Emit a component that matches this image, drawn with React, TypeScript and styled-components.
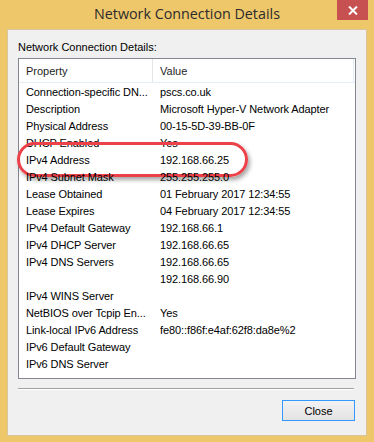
import React from "react";
import styled, { createGlobalStyle } from "styled-components";

const Global = createGlobalStyle`
  html, body { margin: 0; padding: 0; background: #efc76b; }
  body { font-family: "Liberation Sans", Arial, sans-serif; }
`;

const Window = styled.div`
  width: 374px;
  height: 442px;
  background: #efc76b;
  display: flex;
  flex-direction: column;
  box-sizing: border-box;
`;

const TitleBar = styled.div`
  height: 29px;
  display: grid;
  grid-template-columns: 1fr auto 1fr;
  align-items: start;
`;

const Title = styled.div`
  grid-column: 2;
  font-family: "Open Sans", "Noto Sans", sans-serif;
  font-size: 14.3px;
  color: #2b2b2b;
  line-height: 20px;
  padding-top: 4px;
`;

const CloseX = styled.div`
  grid-column: 3;
  justify-self: end;
  margin-right: 6px;
  width: 31px;
  height: 20px;
  background: #c75050;
  display: flex;
  align-items: center;
  justify-content: center;
`;

const Client = styled.div`
  flex: 1;
  margin: 0 7px 6px 7px;
  background: #f0f0f0;
  border: 1px solid #d8c59a;
  box-sizing: border-box;
  padding: 10px 10px 0 10px;
  display: flex;
  flex-direction: column;
  font-size: 11px;
  color: #000;
`;

const Caption = styled.div`
  line-height: 14px;
  height: 18px;
`;

const ListBox = styled.div`
  width: 338px;
  height: 321px;
  box-sizing: border-box;
  border: 1px solid #828790;
  background: #fff;
  display: flex;
  flex-direction: column;
`;

const Header = styled.div`
  display: grid;
  grid-template-columns: 134px 201px;
  height: 24px;
  box-sizing: border-box;
  border-bottom: 1px solid #e5edf6;
`;

const HeaderCell = styled.div<{ $last?: boolean }>`
  padding-left: 7px;
  display: flex;
  align-items: center;
  border-right: 1px solid ${(p) => (p.$last ? "#e5edf6" : "#e5e5e5")};
  box-sizing: border-box;
  color: #1e1e1e;
`;

const Row = styled.div`
  position: relative;
  display: grid;
  grid-template-columns: 134px 1fr;
  height: 17px;
  align-items: center;
`;

const Cell = styled.div`
  padding-left: 7px;
  white-space: nowrap;
  overflow: hidden;
  letter-spacing: -0.1px;
`;

const Highlight = styled.div`
  position: absolute;
  left: -2px;
  top: -9px;
  width: 231px;
  height: 35px;
  box-sizing: border-box;
  border: 3px solid #ec4148;
  border-radius: 18px;
  box-shadow: 2px 3px 4px rgba(0, 0, 0, 0.35);
  pointer-events: none;
`;

const Separator = styled.div`
  margin-top: 9px;
  width: 336px;
  height: 1px;
  background: #a0a0a0;
  border-bottom: 1px solid #fff;
`;

const Footer = styled.div`
  display: flex;
  justify-content: flex-end;
  padding-right: 1px;
  margin-top: 10px;
`;

const Button = styled.button`
  width: 73px;
  height: 21px;
  border: 1px solid #3399ff;
  background: linear-gradient(#f2f2f2, #e3e3e3);
  font-family: "Liberation Sans", Arial, sans-serif;
  font-size: 11px;
  color: #000;
  padding: 0;
`;

const rows: [string, string][] = [
  ["Connection-specific DN...", "pscs.co.uk"],
  ["Description", "Microsoft Hyper-V Network Adapter"],
  ["Physical Address", "00-15-5D-39-BB-0F"],
  ["DHCP Enabled", "Yes"],
  ["IPv4 Address", "192.168.66.25"],
  ["IPv4 Subnet Mask", "255.255.255.0"],
  ["Lease Obtained", "01 February 2017 12:34:55"],
  ["Lease Expires", "04 February 2017 12:34:55"],
  ["IPv4 Default Gateway", "192.168.66.1"],
  ["IPv4 DHCP Server", "192.168.66.65"],
  ["IPv4 DNS Servers", "192.168.66.65"],
  ["", "192.168.66.90"],
  ["IPv4 WINS Server", ""],
  ["NetBIOS over Tcpip En...", "Yes"],
  ["Link-local IPv6 Address", "fe80::f86f:e4af:62f8:da8e%2"],
  ["IPv6 Default Gateway", ""],
  ["IPv6 DNS Server", ""],
];

export default function App() {
  return (
    <Window>
      <Global />
      <TitleBar>
        <Title>Network Connection Details</Title>
        <CloseX>
          <svg width="10" height="9" viewBox="0 0 10 9">
            <path d="M1 0.5 L9 8.5 M9 0.5 L1 8.5" stroke="#fff" strokeWidth="2" />
          </svg>
        </CloseX>
      </TitleBar>
      <Client>
        <Caption>Network Connection Details:</Caption>
        <ListBox>
          <Header>
            <HeaderCell>Property</HeaderCell>
            <HeaderCell $last>Value</HeaderCell>
          </Header>
          {rows.map(([k, v], i) => (
            <Row key={i}>
              <Cell>{k}</Cell>
              <Cell>{v}</Cell>
              {k === "IPv4 Address" && <Highlight />}
            </Row>
          ))}
        </ListBox>
        <Separator />
        <Footer>
          <Button>Close</Button>
        </Footer>
      </Client>
    </Window>
  );
}
